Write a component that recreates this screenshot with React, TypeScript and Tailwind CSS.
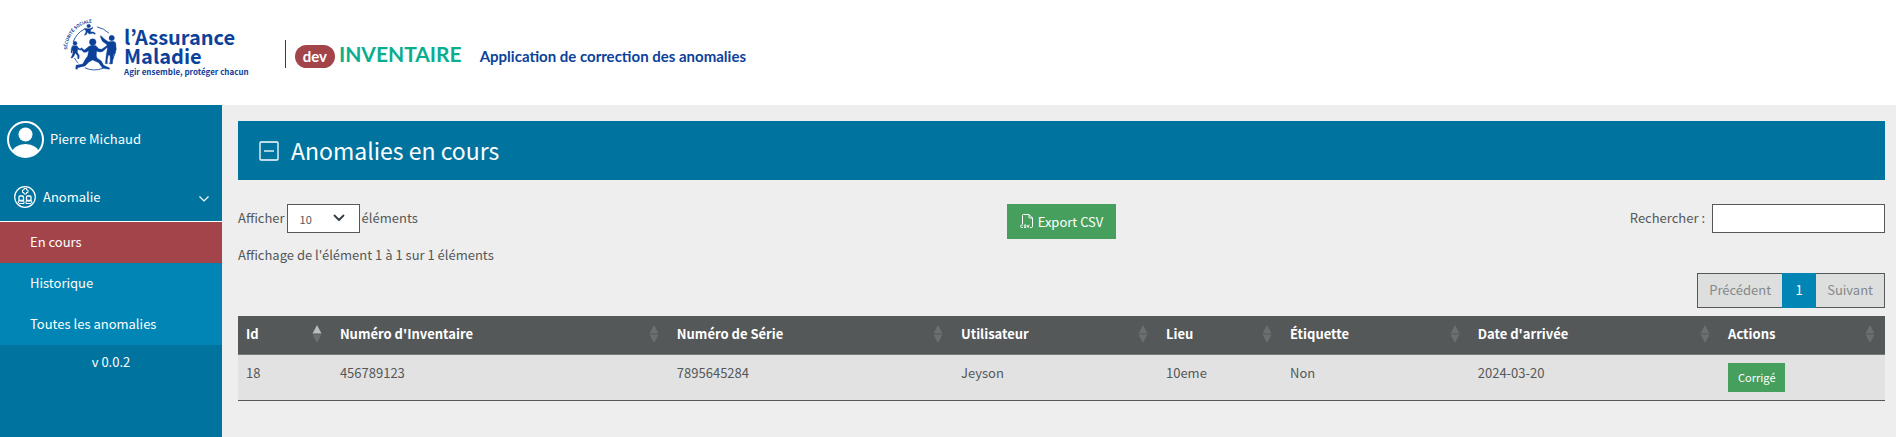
import React from "react";

type Sort = "asc" | "none";
type Column = { label: string; width: string; sort: Sort };

const columns: Column[] = [
  { label: "Id", width: "w-[5.7%]", sort: "asc" },
  { label: "Numéro d'Inventaire", width: "w-[20.46%]", sort: "none" },
  { label: "Numéro de Série", width: "w-[17.25%]", sort: "none" },
  { label: "Utilisateur", width: "w-[12.45%]", sort: "none" },
  { label: "Lieu", width: "w-[7.53%]", sort: "none" },
  { label: "Étiquette", width: "w-[11.4%]", sort: "none" },
  { label: "Date d'arrivée", width: "w-[15.2%]", sort: "none" },
  { label: "Actions", width: "w-[10.01%]", sort: "none" },
];

const rows = [["18", "456789123", "7895645284", "Jeyson", "10eme", "Non", "2024-03-20"]];

function Logo() {
  return (
    <a href="#" className="flex items-start text-[#0c419a]">
      <svg width="64" height="60" viewBox="0 0 192 180" fill="none" stroke="currentColor" strokeLinecap="round" strokeLinejoin="round" aria-hidden="true">
        <defs>
          <path id="arc" d="M22 104 A80 80 0 0 1 150 38" />
        </defs>
        <text fontSize="13" fontWeight="700" fill="currentColor" stroke="none">
          <textPath href="#arc">SÉCURITÉ SOCIALE</textPath>
        </text>
        <g strokeWidth="2.500">
          <path d="M40 80 A65 65 0 0 1 72 43" />
          <path d="M112 36 A65 65 0 0 1 146 54" />
          <path d="M166 112 A65 65 0 0 1 148 146" />
          <path d="M44 130 A65 65 0 0 0 54 144" />
          <path d="M76 159 A65 65 0 0 0 128 160" />
        </g>
        <g fill="currentColor" strokeWidth="1">
          <circle cx="86" cy="33" r="5.500" />
          <path d="M74 40l9 1 7 0 8-4 1 2-7 6-1 5 10 1 6 5-2 2-7-3-10 2-6-5-2 6-6 3-1-2 4-5 1-7-5-4z" />
          <circle cx="45" cy="85" r="6" />
          <path d="M38 92h13l4 7 8 4-1 3-9-3-1 9 6 10-1 9h-4v-8l-7-9-4 9-5 6h-4l5-12 1-9-2-2-1 8-3-1 1-13z" />
          <circle cx="155" cy="69" r="8" />
          <path d="M123 62l10 10 12 8 16-1 6 4 2 20-3 10-5 6-4 28h-6l-1-26-5 0-3 14 0 11h-6l3-28 3-16-1-13-14-10-6-14z" />
          <circle cx="98" cy="81" r="10" />
          <path d="M87 94l10-4 11 2 8 9 9 2 18-13 3 3-17 16-6 2-9-1-4-2-1 14 2 7 13 9 7 13 18 8-1 4-20-3-12-17-18-8-11 6-12 12-22 5-1 5-5-1 1-11 20-4 8-14 7-10 3-16-8 5-7 0-10-11 3-3 9 7z" />
        </g>
      </svg>
      <span className="flex flex-col pt-3 font-['Noto_Sans_CJK_KR',sans-serif]">
        <span className="text-[20px] font-bold leading-[19px]">l’Assurance</span>
        <span className="text-[20px] font-bold leading-[19px]">Maladie</span>
        <span className="pt-px text-[8px] font-bold leading-3">Agir ensemble, protéger chacun</span>
      </span>
    </a>
  );
}

function AvatarIcon() {
  return (
    <svg width="37" height="37" viewBox="0 0 37 37" aria-hidden="true">
      <defs>
        <clipPath id="face">
          <circle cx="18.500" cy="18.500" r="17" />
        </clipPath>
      </defs>
      <circle cx="18.500" cy="18.500" r="17.500" fill="none" stroke="white" strokeWidth="2" />
      <circle cx="18.500" cy="13.500" r="7" fill="white" />
      <ellipse cx="18.500" cy="32.500" rx="13.500" ry="9.500" fill="white" clipPath="url(#face)" />
    </svg>
  );
}

function TeamIcon() {
  return (
    <svg width="22" height="22" viewBox="0 0 22 22" fill="none" stroke="white" aria-hidden="true">
      <circle cx="11" cy="11" r="10.300" strokeWidth="1.200" />
      <path d="M10 2.500h2.500v1.500H14v2.500h-1.500V8H10V6.500H8.500V4H10z" />
      <path d="M5 14.500v-3.500q0-1 1-1h2.500q1 0 1 1v3.500zM12.500 14.500v-3.500q0-1 1-1H16q1 0 1 1v3.500z" strokeWidth="1.300" />
      <path d="M4 16q0-1 1.500-1h3.500q1 0 1 1v1.500H5zM12 16q0-1 1-1h3.500q1.500 0 1.500 1l-1 1.500h-5z" />
    </svg>
  );
}

function CsvIcon() {
  return (
    <svg width="13" height="15" viewBox="0 0 13 15" fill="none" stroke="white" aria-hidden="true">
      <path d="M2.500 10V1.500q0-1 1-1h5.500l3.500 3.500v8.500q0 1-1 1h-1.500M9 .5v3q0 .5.5.5h3" />
      <path d="M3 11H1.500q-.8 0-.8 .8v.9q0 .8.800.8H3M6 11H4.300v1.200h1.500v1.300H4M7 10.800l1.100 2.700 1.100-2.700" strokeWidth=".9" />
    </svg>
  );
}

function SortArrows({ sort }: { sort: Sort }) {
  return (
    <svg width="10" height="18" viewBox="0 0 10 18" aria-hidden="true">
      <path d="M5 0l4.500 8.500h-9z" fill={sort === "asc" ? "#bbbdbd" : "#6c6f70"} />
      <path d="M5 18l4.500-8.500h-9z" fill="#6c6f70" />
    </svg>
  );
}

export default function App() {
  return (
    <div className="flex min-h-screen flex-col bg-[#eeeeee] font-['Noto_Sans_CJK_SC','Noto_Sans',sans-serif] text-[13px] leading-5 text-[#545859]">
      <header className="flex h-[105px] items-start bg-white pl-[60px] pt-[15px]">
        <Logo />
        <div className="ml-9 mt-[25px] flex h-7 items-baseline border-l border-[#0c419a] pl-[9px] pt-1 font-[Lato,sans-serif]">
          <span className="rounded-full bg-[#a3444b] px-2 text-[15px] font-bold leading-[23px] text-white">dev</span>
          <span className="ml-1 text-[21px] font-bold text-[#0aae8e]">INVENTAIRE</span>
          <span className="ml-[18px] text-[15px] font-bold text-[#0c419a]">Application de correction des anomalies</span>
        </div>
      </header>

      <div className="flex flex-1">
        <nav className="w-[222px] shrink-0 bg-[#00749f] text-white">
          <a href="#" className="flex h-[68px] items-center gap-[6px] pl-[7px]">
            <AvatarIcon />
            Pierre Michaud
          </a>
          <button type="button" className="flex h-12 w-full items-center gap-[7px] pl-[14px] pr-3">
            <TeamIcon />
            Anomalie
            <svg className="ml-auto mt-1" width="12" height="8" viewBox="0 0 12 8" fill="none" stroke="white" aria-hidden="true">
              <path d="M1.500 1.500L6 6l4.500-4.500" strokeWidth="1.200" />
            </svg>
          </button>
          <ul className="border-t border-white bg-[#0085b4]">
            <li><a href="#" className="flex h-[41px] items-center bg-[#a3444b] pb-[2px] pl-[30px]">En cours</a></li>
            <li><a href="#" className="flex h-[41px] items-center pb-[2px] pl-[30px]">Historique</a></li>
            <li><a href="#" className="flex h-[41px] items-center pb-[2px] pl-[30px]">Toutes les anomalies</a></li>
          </ul>
          <p className="pt-[7px] text-center">v 0.0.2</p>
        </nav>

        <main className="min-w-0 flex-1 pb-4 pl-4 pr-[11px] pt-4">
          <h1 className="flex h-[59px] items-center bg-[#00749f] pl-[21px] text-[23px] text-white">
            <button type="button" aria-label="Réduire">
              <svg width="20" height="20" viewBox="0 0 20 20" fill="none" stroke="white" aria-hidden="true">
                <rect x="1" y="1" width="18" height="18" rx="1" strokeWidth="1.300" />
                <path d="M5 10h10" strokeWidth="1.300" />
              </svg>
            </button>
            <span className="ml-3 pb-[2px]">Anomalies en cours</span>
          </h1>

          <div className="mt-6 grid grid-cols-3 items-start">
            <div className="flex h-[29px] items-center gap-[2px]">
              <label htmlFor="length" className="pb-[2px]">Afficher</label>
              <span className="relative flex">
                <select id="length" defaultValue="10" className="h-[29px] w-[73px] appearance-none border border-[#545859] bg-white pl-3 text-[11px]">
                  <option>10</option>
                  <option>25</option>
                  <option>50</option>
                  <option>100</option>
                </select>
                <svg className="pointer-events-none absolute right-[15px] top-[10px]" width="12" height="8" viewBox="0 0 12 8" fill="none" stroke="#343a40" aria-hidden="true">
                  <path d="M1.500 1.500L6 6l4.500-4.500" strokeWidth="1.800" strokeLinecap="round" strokeLinejoin="round" />
                </svg>
              </span>
              <span className="pb-[2px]">éléments</span>
            </div>
            <button type="button" className="flex h-[35px] items-center gap-[5px] justify-self-center bg-[#479f5d] px-[13px] text-white">
              <CsvIcon />
              Export CSV
            </button>
            <div className="flex h-[29px] items-center gap-[7px] justify-self-end">
              <label htmlFor="search" className="pb-[2px]">Rechercher :</label>
              <input id="search" type="search" className="h-[29px] w-[173px] border border-[#545859] bg-white px-2" />
            </div>
          </div>

          <p className="mt-[6px]">Affichage de l'élément 1 à 1 sur 1 éléments</p>

          <div className="mt-2 flex h-[35px] justify-end">
            <button type="button" disabled className="border border-r-0 border-[#545859] bg-[#dcdfde] px-[11px] pb-[2px] text-[#85888a]">Précédent</button>
            <button type="button" className="w-[34px] bg-[#0085b4] pb-[2px] text-white">1</button>
            <button type="button" disabled className="border border-l-0 border-[#545859] bg-[#dcdfde] px-[11px] pb-[2px] text-[#85888a]">Suivant</button>
          </div>

          <table className="mt-2 w-full table-fixed border-collapse">
            <thead>
              <tr className="h-[38px] border-b border-[#777b7a] bg-[#545859] text-left text-white">
                {columns.map((c) => (
                  <th key={c.label} scope="col" className={`${c.width} pb-[2px] pl-2 pr-[10px] font-bold`}>
                    <span className="flex items-center justify-between">
                      {c.label}
                      <SortArrows sort={c.sort} />
                    </span>
                  </th>
                ))}
              </tr>
            </thead>
            <tbody>
              {rows.map((r) => (
                <tr key={r[0]} className="border-b border-[#545859] bg-[#e2e2e2] align-top">
                  {r.map((v) => (
                    <td key={v} className="px-2 pt-2">{v}</td>
                  ))}
                  <td className="px-2 pb-2 pt-2">
                    <button type="button" className="block h-[29px] bg-[#479f5d] px-[10px] text-[11px] text-white">Corrigé</button>
                  </td>
                </tr>
              ))}
            </tbody>
          </table>
        </main>
      </div>
    </div>
  );
}
